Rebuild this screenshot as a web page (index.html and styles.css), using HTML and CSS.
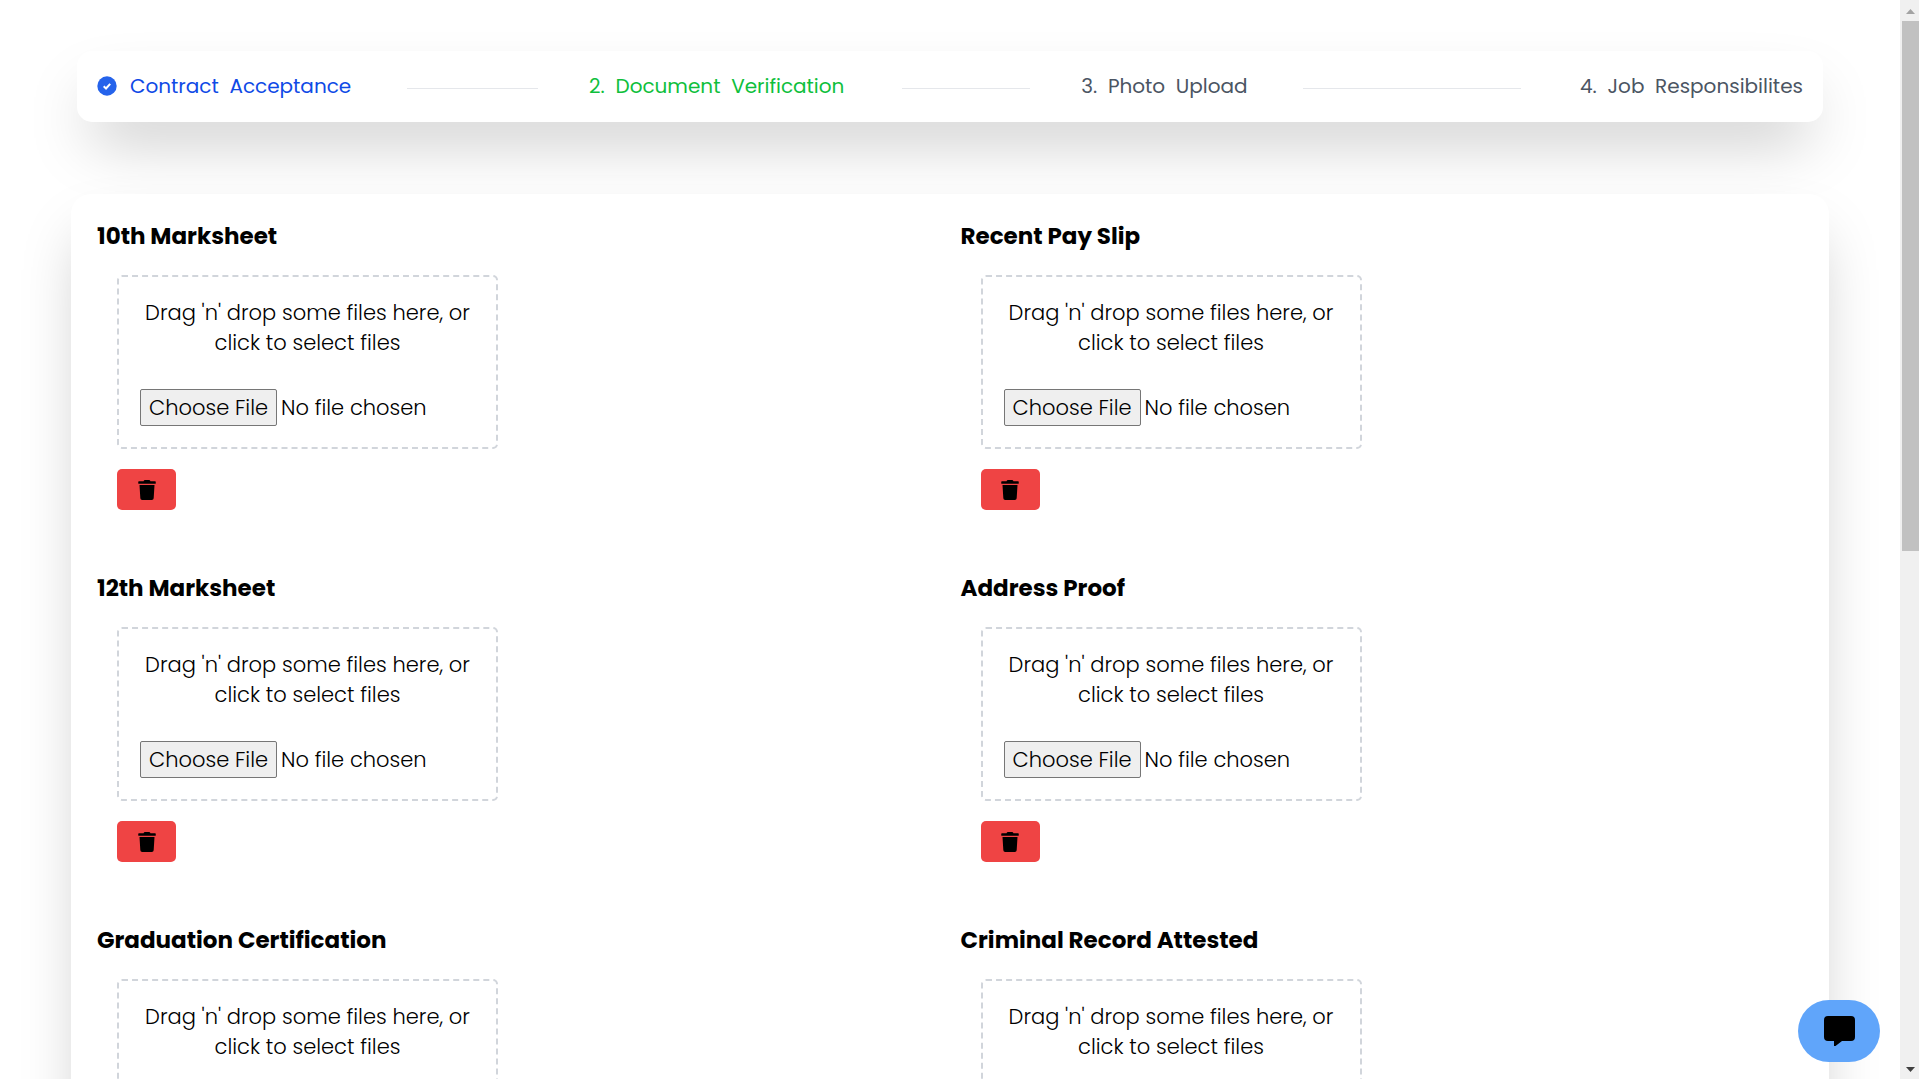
FILE: index.html
```html
<!DOCTYPE html>
<html lang="en">
<head>
<meta charset="utf-8">
<title>Document Verification</title>
<link rel="stylesheet" href="styles.css">
</head>
<body>
<svg width="0" height="0" class="sprite" aria-hidden="true">
  <symbol id="trash" viewBox="0 0 448 512"><path d="M432 32H312l-9.400-18.700A24 24 0 0 0 281.100 0H166.800a23.700 23.700 0 0 0-21.400 13.300L136 32H16A16 16 0 0 0 0 48v32a16 16 0 0 0 16 16h416a16 16 0 0 0 16-16V48a16 16 0 0 0-16-16zM32 128l21.200 339a48 48 0 0 0 47.900 45h245.800a48 48 0 0 0 47.900-45L416 128z"/></symbol>
</svg>
<div class="shell">
  <div class="page">
    <ol class="stepper">
      <li class="step done">
        <svg class="check" viewBox="0 0 20 20" aria-hidden="true"><circle cx="10" cy="10" r="9.700"/><path d="M6.700 10.300l2.300 2.200 4.200-4.700"/></svg>
        <span>Contract&nbsp; Acceptance</span>
      </li>
      <li class="line" aria-hidden="true"></li>
      <li class="step current">2.&nbsp; Document&nbsp; Verification</li>
      <li class="line" aria-hidden="true"></li>
      <li class="step">3.&nbsp; Photo&nbsp; Upload</li>
      <li class="line" aria-hidden="true"></li>
      <li class="step last">4.&nbsp; Job&nbsp; Responsibilites</li>
    </ol>
    <main class="card">
      <section class="doc">
        <h2><label for="f1">10th Marksheet</label></h2>
        <div class="drop"><p>Drag 'n' drop some files here, or click to select files</p><input type="file" id="f1"></div>
        <button class="delete" type="button" aria-label="Delete"><svg><use href="#trash"/></svg></button>
      </section>
      <section class="doc">
        <h2><label for="f2">Recent Pay Slip</label></h2>
        <div class="drop"><p>Drag 'n' drop some files here, or click to select files</p><input type="file" id="f2"></div>
        <button class="delete" type="button" aria-label="Delete"><svg><use href="#trash"/></svg></button>
      </section>
      <section class="doc">
        <h2><label for="f3">12th Marksheet</label></h2>
        <div class="drop"><p>Drag 'n' drop some files here, or click to select files</p><input type="file" id="f3"></div>
        <button class="delete" type="button" aria-label="Delete"><svg><use href="#trash"/></svg></button>
      </section>
      <section class="doc">
        <h2><label for="f4">Address Proof</label></h2>
        <div class="drop"><p>Drag 'n' drop some files here, or click to select files</p><input type="file" id="f4"></div>
        <button class="delete" type="button" aria-label="Delete"><svg><use href="#trash"/></svg></button>
      </section>
      <section class="doc">
        <h2><label for="f5">Graduation Certification</label></h2>
        <div class="drop"><p>Drag 'n' drop some files here, or click to select files</p><input type="file" id="f5"></div>
        <button class="delete" type="button" aria-label="Delete"><svg><use href="#trash"/></svg></button>
      </section>
      <section class="doc">
        <h2><label for="f6">Criminal Record Attested</label></h2>
        <div class="drop"><p>Drag 'n' drop some files here, or click to select files</p><input type="file" id="f6"></div>
        <button class="delete" type="button" aria-label="Delete"><svg><use href="#trash"/></svg></button>
      </section>
    </main>
  </div>
  <div class="scrollbar" aria-hidden="true">
    <svg viewBox="0 0 9 5"><path d="M0 5h9L4.500 0z" fill="#a3a3a3"/></svg>
    <div class="track"><div class="thumb"></div></div>
    <svg viewBox="0 0 9 5"><path d="M0 0h9L4.500 5z" fill="#404040"/></svg>
  </div>
</div>
<button class="chat" type="button" aria-label="Chat"><svg viewBox="0 0 31 30"><path d="M4 0h23a4 4 0 0 1 4 4v17a4 4 0 0 1-4 4h-9l-6.500 5H10v-5H4a4 4 0 0 1-4-4V4a4 4 0 0 1 4-4z"/></svg></button>
</body>
</html>
```

FILE: styles.css
```css
* { box-sizing: border-box; }
body {
  margin: 0;
  background: #fff;
  color: #000;
  font-family: Poppins, Inter, sans-serif;
  font-size: 21px;
  font-weight: 300;
  line-height: 30px;
}
.sprite { position: absolute; }
.shell {
  display: grid;
  grid-template-columns: 1fr 19px;
  height: 100vh;
  overflow: hidden;
}
.page { padding: 51px 71px 0; overflow: hidden; }
.stepper {
  display: grid;
  grid-template-columns: 258fr 131fr 261fr 128fr 170fr 218fr 230fr;
  column-gap: 51px;
  align-items: center;
  margin: 0 6px 72px;
  padding: 20px 20px 21px;
  list-style: none;
  border-radius: 15px;
  background: #fff;
  box-shadow: 0 31px 62px -15px rgba(0, 0, 0, .25);
}
.step {
  display: flex;
  align-items: center;
  gap: 13px;
  font-size: 20px;
  font-weight: 400;
  color: #4b5563;
  white-space: nowrap;
}
.done { color: #0f4ae6; }
.current { color: #0fbf3c; }
.last { justify-content: flex-end; }
.line { height: 1px; margin-top: 4px; background: #e5e7eb; }
.check { width: 20px; height: 20px; }
.check circle { fill: #2563eb; }
.check path { fill: none; stroke: #fff; stroke-width: 2; }
.card {
  display: grid;
  grid-template-columns: 1fr 1fr;
  gap: 0 20px;
  padding: 27px 25px 80px 26px;
  border-radius: 20px;
  background: #fff;
  box-shadow: 0 31px 62px -15px rgba(0, 0, 0, .25);
}
.doc { padding-bottom: 63px; }
h2 {
  margin: 0 0 23px;
  font-size: 23px;
  font-weight: 700;
  line-height: 31px;
}
.drop {
  width: 381px;
  margin: 0 20px 20px;
  padding: 21px;
  border: 2px dashed #d1d5db;
  border-radius: 5px;
}
.drop p { margin: 0 0 31px; text-align: center; }
.drop input {
  display: block;
  width: 100%;
  height: 37px;
  font: inherit;
  line-height: 30px;
}
.drop input::file-selector-button {
  height: 37px;
  padding: 1px 8px;
  border: 1px solid #767676;
  border-radius: 2px;
  background: #efefef;
  font: inherit;
  color: #000;
}
.delete {
  display: flex;
  align-items: center;
  justify-content: center;
  width: 59px;
  height: 41px;
  margin-left: 20px;
  padding: 0;
  border: 0;
  border-radius: 5px;
  background: #ef4444;
}
.delete svg { width: 18px; height: 20px; }
.chat {
  position: fixed;
  right: 39px;
  bottom: 17px;
  display: flex;
  align-items: center;
  justify-content: center;
  width: 82px;
  height: 62px;
  padding: 0;
  border: 0;
  border-radius: 31px;
  background: #60a5fa;
}
.chat svg { width: 31px; height: 30px; }
.scrollbar {
  display: flex;
  flex-direction: column;
  align-items: center;
  gap: 7px;
  padding: 9px 0 7px 2px;
  background: #f0f0f0;
}
.scrollbar svg { width: 9px; height: 5px; }
.track { flex: 1; width: 100%; }
.thumb { height: 51%; background: #c1c1c1; }
```
